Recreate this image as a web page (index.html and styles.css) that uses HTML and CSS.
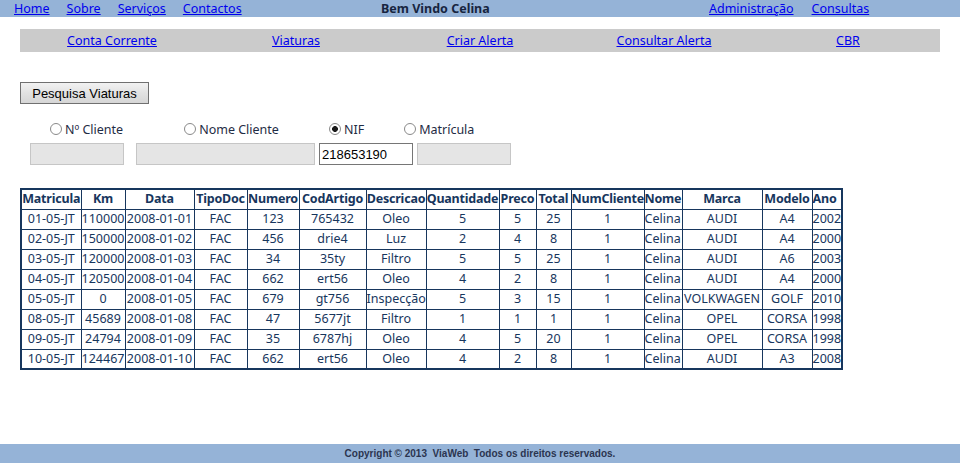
FILE: index.html
```html
<!DOCTYPE html>
<html lang="pt">
<head>
<meta charset="utf-8">
<title>ViaWeb - Pesquisa Viaturas</title>
<link rel="stylesheet" href="styles.css">
</head>
<body>
<div class="page">
  <header class="topbar">
    <nav class="main-links">
      <a href="#">Home</a>
      <a href="#">Sobre</a>
      <a href="#">Serviços</a>
      <a href="#">Contactos</a>
    </nav>
    <div class="welcome">Bem Vindo Celina</div>
    <nav class="admin-links">
      <a href="#">Administração</a>
      <a href="#">Consultas</a>
    </nav>
  </header>

  <nav class="subnav">
    <a href="#">Conta Corrente</a>
    <a href="#">Viaturas</a>
    <a href="#">Criar Alerta</a>
    <a href="#">Consultar Alerta</a>
    <a href="#">CBR</a>
  </nav>

  <main class="content">
    <button class="search-btn" type="button">Pesquisa Viaturas</button>

    <div class="filters">
      <div class="radios">
        <label class="opt opt-1"><input type="radio" name="tipo"><span>Nº Cliente</span></label>
        <label class="opt opt-2"><input type="radio" name="tipo"><span>Nome Cliente</span></label>
        <label class="opt opt-3"><input type="radio" name="tipo" checked><span>NIF</span></label>
        <label class="opt opt-4"><input type="radio" name="tipo"><span>Matrícula</span></label>
      </div>
      <div class="fields">
        <input class="field f-1" type="text" disabled>
        <input class="field f-2" type="text" disabled>
        <input class="field f-3 active" type="text" value="218653190">
        <input class="field f-4" type="text" disabled>
      </div>
    </div>

    <table class="results">
      <colgroup>
        <col class="c-mat"><col class="c-km"><col class="c-data"><col class="c-tipo"><col class="c-num">
        <col class="c-cod"><col class="c-desc"><col class="c-qtd"><col class="c-preco"><col class="c-total">
        <col class="c-numcli"><col class="c-nome"><col class="c-marca"><col class="c-modelo"><col class="c-ano">
      </colgroup>
      <thead>
        <tr>
          <th>Matricula</th><th>Km</th><th>Data</th><th>TipoDoc</th><th>Numero</th><th>CodArtigo</th><th>Descricao</th><th>Quantidade</th><th>Preco</th><th>Total</th><th>NumCliente</th><th class="left">Nome</th><th>Marca</th><th>Modelo</th><th class="left">Ano</th>
        </tr>
      </thead>
      <tbody>
        <tr><td>01-05-JT</td><td>110000</td><td>2008-01-01</td><td>FAC</td><td>123</td><td>765432</td><td>Oleo</td><td>5</td><td>5</td><td>25</td><td>1</td><td class="left">Celina</td><td>AUDI</td><td>A4</td><td class="left">2002</td></tr>
        <tr><td>02-05-JT</td><td>150000</td><td>2008-01-02</td><td>FAC</td><td>456</td><td>drie4</td><td>Luz</td><td>2</td><td>4</td><td>8</td><td>1</td><td class="left">Celina</td><td>AUDI</td><td>A4</td><td class="left">2000</td></tr>
        <tr><td>03-05-JT</td><td>120000</td><td>2008-01-03</td><td>FAC</td><td>34</td><td>35ty</td><td>Filtro</td><td>5</td><td>5</td><td>25</td><td>1</td><td class="left">Celina</td><td>AUDI</td><td>A6</td><td class="left">2003</td></tr>
        <tr><td>04-05-JT</td><td>120500</td><td>2008-01-04</td><td>FAC</td><td>662</td><td>ert56</td><td>Oleo</td><td>4</td><td>2</td><td>8</td><td>1</td><td class="left">Celina</td><td>AUDI</td><td>A4</td><td class="left">2000</td></tr>
        <tr><td>05-05-JT</td><td>0</td><td>2008-01-05</td><td>FAC</td><td>679</td><td>gt756</td><td>Inspecção</td><td>5</td><td>3</td><td>15</td><td>1</td><td class="left">Celina</td><td>VOLKWAGEN</td><td>GOLF</td><td class="left">2010</td></tr>
        <tr><td>08-05-JT</td><td>45689</td><td>2008-01-08</td><td>FAC</td><td>47</td><td>5677jt</td><td>Filtro</td><td>1</td><td>1</td><td>1</td><td>1</td><td class="left">Celina</td><td>OPEL</td><td>CORSA</td><td class="left">1998</td></tr>
        <tr><td>09-05-JT</td><td>24794</td><td>2008-01-09</td><td>FAC</td><td>35</td><td>6787hj</td><td>Oleo</td><td>4</td><td>5</td><td>20</td><td>1</td><td class="left">Celina</td><td>OPEL</td><td>CORSA</td><td class="left">1998</td></tr>
        <tr><td>10-05-JT</td><td>124467</td><td>2008-01-10</td><td>FAC</td><td>662</td><td>ert56</td><td>Oleo</td><td>4</td><td>2</td><td>8</td><td>1</td><td class="left">Celina</td><td>AUDI</td><td>A3</td><td class="left">2008</td></tr>
      </tbody>
    </table>
  </main>

  <footer class="footer">Copyright © 2013&nbsp; ViaWeb&nbsp; Todos os direitos reservados.</footer>
</div>
</body>
</html>
```

FILE: styles.css
```css
* { box-sizing: border-box; }

html, body {
  margin: 0;
  padding: 0;
  background: #ffffff;
}

body {
  font-family: "Noto Sans", "Open Sans", sans-serif;
  font-size: 12.5px;
  color: #17365d;
}

.page {
  min-height: 100vh;
  display: flex;
  flex-direction: column;
}

a {
  color: #0000ee;
  text-decoration: underline;
}

/* Top bar */
.topbar {
  height: 17px;
  background: #95b3d7;
  display: grid;
  grid-template-columns: 381px 328px auto;
  align-items: center;
  line-height: 17px;
}

.main-links {
  display: flex;
  gap: 17px;
  padding-left: 14px;
}

.welcome {
  font-weight: bold;
  color: #17253f;
}

.admin-links {
  display: flex;
  gap: 18px;
}

/* Sub navigation */
.subnav {
  margin: 12px 20px 0;
  height: 23px;
  background: #cbcbcb;
  display: grid;
  grid-template-columns: repeat(5, 1fr);
  align-items: center;
  text-align: center;
  line-height: 24px;
}

/* Content */
.content {
  padding: 30px 20px 0;
}

.search-btn {
  display: block;
  width: 129px;
  height: 22px;
  padding: 0;
  font-family: "Liberation Sans", Arial, sans-serif;
  font-size: 13px;
  color: #000;
  border: 1px solid #707070;
  border-radius: 0;
  background: linear-gradient(#f2f2f2, #e2e2e2 50%, #d6d6d6);
}

.filters {
  margin-top: 16px;
}

.radios {
  display: flex;
  align-items: center;
  height: 18px;
  color: #1f2c44;
}

.opt {
  display: flex;
  align-items: center;
  gap: 3px;
}

.opt input {
  -webkit-appearance: none;
  appearance: none;
  margin: 0;
  width: 12px;
  height: 12px;
  border: 1px solid #8a8a8a;
  border-radius: 50%;
  background: #ffffff;
}

.opt input:checked {
  background: radial-gradient(circle, #1a1a1a 0, #1a1a1a 2.6px, #ffffff 3.2px);
}

.opt-1 { margin-left: 30px; }
.opt-2 { margin-left: 61px; }
.opt-3 { margin-left: 50px; }
.opt-4 { margin-left: 40px; }

.fields {
  display: grid;
  grid-template-columns: 94px 187px 94px 94px;
  column-gap: 4px;
  margin-top: 5px;
  padding-left: 10px;
}

.field {
  width: 100%;
  height: 22px;
  margin: 0;
  padding: 1px 2px;
  font-family: "Liberation Sans", Arial, sans-serif;
  font-size: 13px;
  color: #000;
  background: #e5e5e5;
  border: 1px solid #c6c6c6;
}

.f-2 {
  margin-left: 8px;
  width: 179px;
}

.field.active {
  background: #ffffff;
  border-color: #767676;
}

/* Results table */
.results {
  margin-top: 23px;
  border-collapse: collapse;
  table-layout: fixed;
  width: 821px;
  border: 2px solid #17365d;
  color: #17365d;
}

.results th,
.results td {
  border: 1px solid #17365d;
  padding: 0;
  height: 20px;
  line-height: 18px;
  text-align: center;
  white-space: nowrap;
  overflow: hidden;
}

.results th {
  font-weight: bold;
  letter-spacing: -0.2px;
}

.results .left { text-align: left; }

.c-mat { width: 60px; }
.c-km { width: 44px; }
.c-data { width: 69px; }
.c-tipo { width: 53px; }
.c-num { width: 52px; }
.c-cod { width: 67px; }
.c-desc { width: 60px; }
.c-qtd { width: 73px; }
.c-preco { width: 37px; }
.c-total { width: 35px; }
.c-numcli { width: 73px; }
.c-nome { width: 38px; }
.c-marca { width: 80px; }
.c-modelo { width: 50px; }
.c-ano { width: 30px; }

/* Footer */
.footer {
  margin-top: auto;
  height: 19px;
  background: #95b3d7;
  text-align: center;
  line-height: 20px;
  font-family: "Liberation Sans", Arial, sans-serif;
  font-size: 10px;
  font-weight: bold;
  color: #2b3550;
  white-space: pre;
}
```
